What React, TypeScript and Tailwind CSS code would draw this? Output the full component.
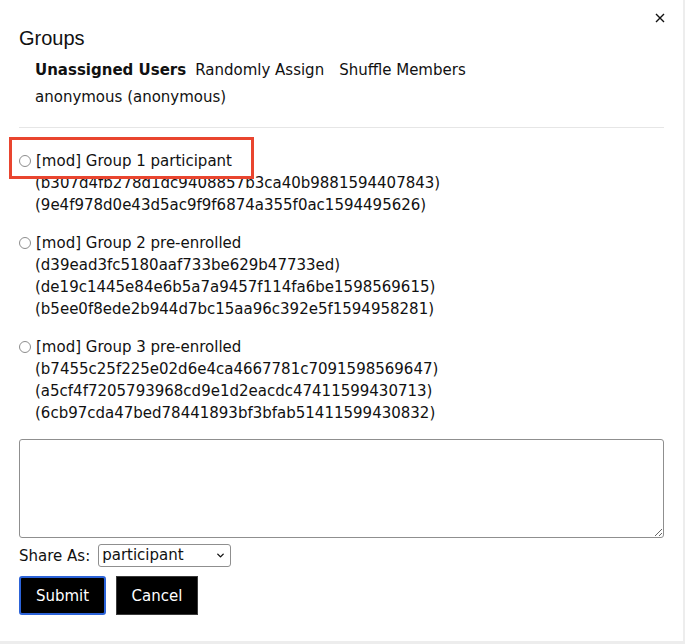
import { ChevronDown } from "lucide-react";

const groups = [
  {
    name: "[mod] Group 1 participant",
    members: [
      "(b307d4fb278d1dc9408857b3ca40b9881594407843)",
      "(9e4f978d0e43d5ac9f9f6874a355f0ac1594495626)",
    ],
  },
  {
    name: "[mod] Group 2 pre-enrolled",
    members: [
      "(d39ead3fc5180aaf733be629b47733ed)",
      "(de19c1445e84e6b5a7a9457f114fa6be1598569615)",
      "(b5ee0f8ede2b944d7bc15aa96c392e5f1594958281)",
    ],
  },
  {
    name: "[mod] Group 3 pre-enrolled",
    members: [
      "(b7455c25f225e02d6e4ca4667781c7091598569647)",
      "(a5cf4f7205793968cd9e1d2eacdc47411599430713)",
      "(6cb97cda47bed78441893bf3bfab51411599430832)",
    ],
  },
];

export default function App() {
  return (
    <div className="w-[685px] h-[644px] bg-[#ededed] overflow-hidden">
      <div
        className="relative w-[683px] h-[641px] bg-white px-[19px] pt-[26px] text-[15px] leading-[22px] text-[#111]"
        style={{ fontFamily: '"DejaVu Sans", Verdana, sans-serif' }}
      >
        {/* Close */}
        <button className="absolute right-[18px] top-[13px] w-[10px] h-[10px] flex items-center justify-center">
          <svg width="10" height="10" viewBox="0 0 10 10">
            <path d="M1 1 L9 9 M9 1 L1 9" stroke="#111" strokeWidth="1.4" />
          </svg>
        </button>

        <h2
          className="text-[20px] leading-[24px] text-[#111]"
          style={{ fontFamily: '"Liberation Sans", Arial, sans-serif' }}
        >
          Groups
        </h2>

        {/* Tabs */}
        <div className="pl-[16px] mt-[9px] flex">
          <span className="font-bold">Unassigned Users</span>
          <span className="ml-[9px]">Randomly Assign</span>
          <span className="ml-[15px]">Shuffle Members</span>
        </div>
        <div className="pl-[16px] mt-[5px]">anonymous (anonymous)</div>

        <hr className="mt-[19px] border-t border-[#e6e6e6]" />

        {/* Groups list */}
        <div className="mt-[22px] flex flex-col gap-[16px]">
          {groups.map((g) => (
            <div key={g.name}>
              <label className="flex items-center">
                <input
                  type="radio"
                  name="group"
                  className="appearance-none w-[12px] h-[12px] rounded-full border border-[#8d8d8d] bg-white mr-[5px]"
                />
                <span>{g.name}</span>
              </label>
              {g.members.map((m) => (
                <div key={m} className="pl-[16px]">
                  {m}
                </div>
              ))}
            </div>
          ))}
        </div>

        <textarea className="mt-[15px] block w-full h-[99px] border border-[#8f8f8f] rounded-[3px]" />

        <div className="mt-[6px] flex items-center">
          <span>Share As:</span>
          <div className="relative ml-[8px]">
            <select className="appearance-none w-[133px] h-[23px] border border-[#8f8f8f] rounded-[3px] pl-[3px] leading-[21px]">
              <option>participant</option>
            </select>
            <ChevronDown
              className="absolute right-[5px] top-[6px] w-[11px] h-[11px] pointer-events-none"
              strokeWidth={3}
            />
          </div>
        </div>

        <div className="mt-[9px] flex gap-[10px]">
          <button className="w-[87px] h-[39px] bg-black text-white border-2 border-[#2c63d8] rounded-[3px]">
            Submit
          </button>
          <button className="w-[82px] h-[39px] bg-black text-white border border-[#3a3a3a]">
            Cancel
          </button>
        </div>

        {/* Highlight annotation */}
        <div className="absolute left-[9px] top-[137px] w-[245px] h-[42px] border-[3px] border-[#e9452f] pointer-events-none" />
      </div>
    </div>
  );
}
